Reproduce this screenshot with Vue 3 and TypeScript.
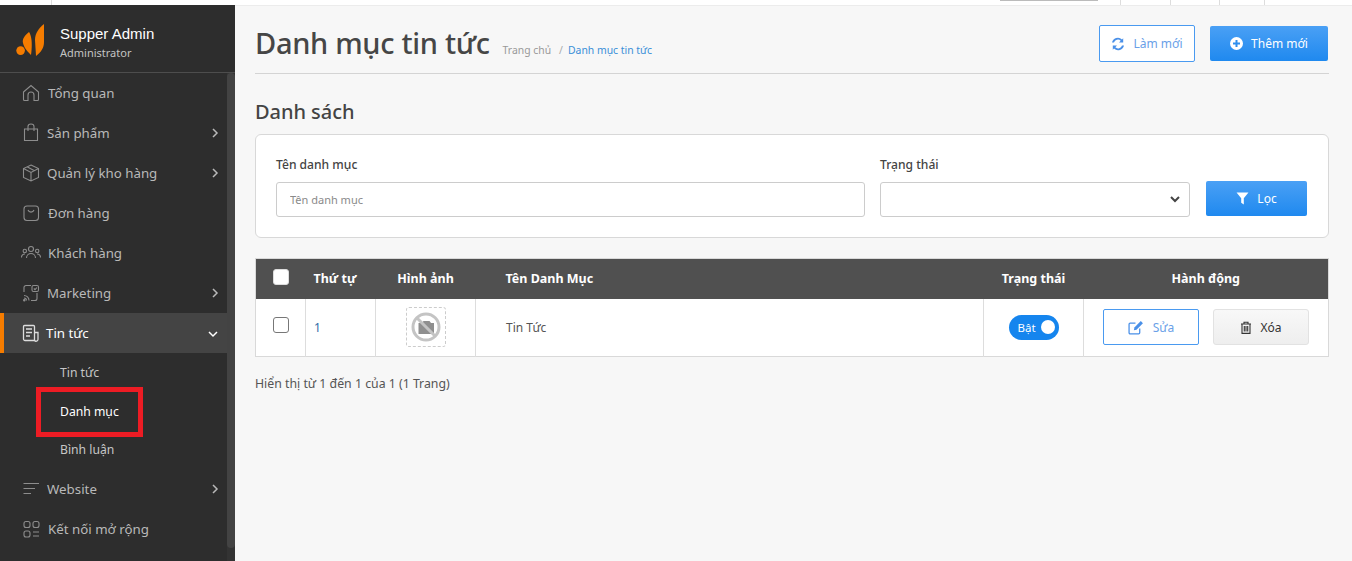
<script setup lang="ts">
interface Item { label: string; icon: string; arrow?: boolean; active?: boolean; gap: number }
const items: Item[] = [
  { label: 'Tổng quan', icon: 'home', gap: 7 },
  { label: 'Sản phẩm', icon: 'bag', arrow: true, gap: 6 },
  { label: 'Quản lý kho hàng', icon: 'box', arrow: true, gap: 6 },
  { label: 'Đơn hàng', icon: 'order', gap: 7 },
  { label: 'Khách hàng', icon: 'users', gap: 7 },
  { label: 'Marketing', icon: 'mkt', arrow: true, gap: 6 },
  { label: 'Tin tức', icon: 'news', active: true, gap: 5 },
]
const after: Item[] = [
  { label: 'Website', icon: 'lines', arrow: true, gap: 6 },
  { label: 'Kết nối mở rộng', icon: 'grid', gap: 7 },
]
const subs = ['Tin tức', 'Danh mục', 'Bình luận']
</script>

<template>
  <div class="page">
    <div class="topstrip">
      <span class="t1"></span>
      <span class="t2"></span>
      <span class="tabs"><i></i><i></i><i></i><i></i></span>
    </div>
    <div class="body">
      <aside class="side">
        <div class="brand">
          <svg class="logo" width="30" height="34" viewBox="0 0 30 34">
            <circle cx="5.600" cy="27.600" r="4.300" fill="#f57c00" />
            <path d="M14 9 C10 12 7 16 8 20 C9 25 13 29 16 32 C17 25 17 18 16 14 C15.500 12 15 10 14 9Z" fill="#f57c00" />
            <path d="M29 1 C24 5 20 10 20 17 L21 33 C26 29 29 25 29 19Z" fill="#f57c00" />
          </svg>
          <div class="who">
            <div class="name">Supper Admin</div>
            <div class="role">Administrator</div>
          </div>
        </div>
        <div class="scrollwrap">
          <nav class="menu">
            <a v-for="it in items" :key="it.label" class="item" :class="{ active: it.active }">
              <svg class="ic" width="20" height="20" viewBox="0 0 20 20" fill="none" stroke="currentColor" stroke-width="1.100">
                <template v-if="it.icon === 'home'">
                  <path d="M2.500 9 L10 2.500 L17.500 9 V16.500 a1 1 0 0 1 -1 1 H13 V12 a3 3 0 0 0 -6 0 V17.500 H3.500 a1 1 0 0 1 -1 -1Z" />
                </template>
                <template v-else-if="it.icon === 'bag'">
                  <path d="M3.500 6 H16.500 V17.500 H3.500Z M7 8 V3.500 a3 2.500 0 0 1 6 0 V8" />
                </template>
                <template v-else-if="it.icon === 'box'">
                  <path d="M10 2 L17.500 5.500 V14.500 L10 18 L2.500 14.500 V5.500Z M2.500 5.500 L10 9.500 L17.500 5.500 M10 9.500 V18 M6 3.800 L13.500 7.800" />
                </template>
                <template v-else-if="it.icon === 'order'">
                  <rect x="3" y="3" width="14.500" height="14.500" rx="3" /><path d="M7 7 a3.200 3.200 0 0 0 6 0" />
                </template>
                <template v-else-if="it.icon === 'users'">
                  <circle cx="10" cy="6" r="2.500" /><circle cx="3.800" cy="8" r="1.700" /><circle cx="16.200" cy="8" r="1.700" />
                  <path d="M5.500 15 a4.500 4.500 0 0 1 9 0 M0.500 14.500 a3.300 3.300 0 0 1 3.500 -3.500 M19.500 14.500 a3.300 3.300 0 0 0 -3.500 -3.500" />
                </template>
                <template v-else-if="it.icon === 'mkt'">
                  <path d="M3 9 V4.500 a2 2 0 0 1 2 -2 H10 M16 10 V15.500 a2 2 0 0 1 -2 2 H10" />
                  <rect x="11" y="2.500" width="6.500" height="6" rx="1.500" /><path d="M12.800 5.500 l1.200 1.200 2 -2.200" />
                  <path d="M3 12.500 a5 5 0 0 1 5 5 M3 15 a2.500 2.500 0 0 1 2.500 2.500" /><circle cx="3.300" cy="17.300" r=".7" fill="currentColor" />
                </template>
                <template v-else-if="it.icon === 'news'">
                  <path d="M13.500 17.500 H4 a1.500 1.500 0 0 1 -1.500 -1.500 V3.500 a1 1 0 0 1 1 -1 H12.500 a1 1 0 0 1 1 1 V17.500 a2 2 0 0 0 3.500 -1 V9.500 H13.500" stroke-width="1.300" />
                  <path d="M5 6 H11 M5 9.500 H11 M5 13 H9" stroke-width="1.500" />
                </template>
              </svg>
              <span class="lb" :style="{ marginLeft: it.gap + 'px' }">{{ it.label }}</span>
              <svg v-if="it.arrow" class="ar" width="8" height="10" viewBox="0 0 8 10" fill="none" stroke="currentColor" stroke-width="1.500"><path d="M2 1 L6 5 L2 9" /></svg>
              <svg v-if="it.active" class="ar down" width="10" height="8" viewBox="0 0 10 8" fill="none" stroke="currentColor" stroke-width="1.500"><path d="M1 2 L5 6 L9 2" /></svg>
            </a>
            <div class="subs">
              <a v-for="s in subs" :key="s" class="sub" :class="{ cur: s === 'Danh mục' }">{{ s }}</a>
              <div class="redbox"></div>
            </div>
            <a v-for="it in after" :key="it.label" class="item">
              <svg class="ic" width="20" height="20" viewBox="0 0 20 20" fill="none" stroke="currentColor" stroke-width="1.100">
                <template v-if="it.icon === 'lines'">
                  <path d="M2.500 4.500 H18 M2.500 9.500 H14 M2.500 14.500 H10" />
                </template>
                <template v-else>
                  <rect x="3" y="2.500" width="6" height="6" rx="2" /><rect x="12" y="2.500" width="6" height="6" rx="2" /><rect x="3" y="12" width="6" height="6" rx="2" />
                  <path d="M12 13 H18 M12 17 H18" />
                </template>
              </svg>
              <span class="lb" :style="{ marginLeft: it.gap + 'px' }">{{ it.label }}</span>
              <svg v-if="it.arrow" class="ar" width="8" height="10" viewBox="0 0 8 10" fill="none" stroke="currentColor" stroke-width="1.500"><path d="M2 1 L6 5 L2 9" /></svg>
            </a>
          </nav>
          <div class="scrollbar"><div class="thumb"></div></div>
        </div>
      </aside>

      <main class="main">
        <header class="head">
          <div class="titles">
            <h1>Danh mục tin tức</h1>
            <div class="crumb"><span class="c1">Trang chủ</span><span class="sep">/</span><span class="c2">Danh mục tin tức</span></div>
          </div>
          <div class="actions">
            <button class="btn outline refresh">
              <svg width="14" height="14" viewBox="0 0 14 14" fill="#4a90e8"><path d="M12.200 1.200 V5.400 H8 L9.700 3.700 A4.100 4.100 0 0 0 3 5.600 H1 A6 6 0 0 1 11 2.400Z M1.800 12.800 V8.600 H6 L4.300 10.300 A4.100 4.100 0 0 0 11 8.400 H13 A6 6 0 0 1 3 11.600Z" /></svg>
              Làm mới
            </button>
            <button class="btn primary add">
              <svg width="13" height="13" viewBox="0 0 13 13"><circle cx="6.500" cy="6.500" r="6.500" fill="#fff" /><path d="M6.500 3 V10 M3 6.500 H10" stroke="#2f8fee" stroke-width="2" /></svg>
              Thêm mới
            </button>
          </div>
        </header>

        <h2>Danh sách</h2>

        <section class="filter">
          <div class="f-name">
            <label>Tên danh mục</label>
            <input class="inp" placeholder="Tên danh mục" />
          </div>
          <div class="f-status">
            <label>Trạng thái</label>
            <div class="sel">
              <svg width="10" height="7" viewBox="0 0 10 7" fill="none" stroke="#444" stroke-width="2"><path d="M1 1 L5 5 L9 1" /></svg>
            </div>
          </div>
          <button class="btn primary loc">
            <svg width="13" height="13" viewBox="0 0 12 12" fill="#fff"><path d="M0.500 0.500 H11.500 L7.200 5.800 V11.500 L4.800 10 V5.800Z" /></svg>
            Lọc
          </button>
        </section>

        <table class="tbl">
          <colgroup>
            <col class="w50" /><col class="w70" /><col class="w100" /><col /><col class="w100" /><col class="w245" />
          </colgroup>
          <thead>
            <tr>
              <th><span class="cb white"></span></th>
              <th class="l7">Thứ tự</th>
              <th>Hình ảnh</th>
              <th class="l30">Tên Danh Mục</th>
              <th>Trạng thái</th>
              <th>Hành động</th>
            </tr>
          </thead>
          <tbody>
            <tr>
              <td class="c"><span class="cb"></span></td>
              <td class="num">1</td>
              <td class="c">
                <span class="noimg">
                  <svg width="32" height="32" viewBox="0 0 32 32">
                    <path d="M8.500 12 H12 L13.500 10 H19.500 L21 12 H24 V23 H8.500Z" fill="#8f8f8f" />
                    <circle cx="16" cy="16" r="13" fill="none" stroke="#c4c4c4" stroke-width="3" />
                    <path d="M7 7 L25 25" stroke="#c4c4c4" stroke-width="3" />
                  </svg>
                </span>
              </td>
              <td class="name-cell">Tin Tức</td>
              <td class="c"><span class="toggle">Bật<i></i></span></td>
              <td>
                <div class="row-act">
                  <button class="btn outline edit">
                    <svg width="16" height="15" viewBox="0 0 15 14" fill="none" stroke="#4a90e8" stroke-width="1.200"><path d="M11 8 V12 a1 1 0 0 1 -1 1 H2 a1 1 0 0 1 -1 -1 V4 a1 1 0 0 1 1 -1 H7" /><path d="M5.500 9.500 L6 7 L12 1 L14 3 L8 9Z" fill="#4a90e8" stroke="none" /></svg>
                    Sửa
                  </button>
                  <button class="btn gray del">
                    <svg width="12" height="13" viewBox="0 0 12 13" fill="none" stroke="#333" stroke-width="1.100"><path d="M1 3 H11 M4 3 V1.200 H8 V3 M2 3 V12.400 H10 V3 M4.300 5 V10.500 M6 5 V10.500 M7.700 5 V10.500" /></svg>
                    Xóa
                  </button>
                </div>
              </td>
            </tr>
          </tbody>
        </table>
        <p class="foot">Hiển thị từ 1 đến 1 của 1 (1 Trang)</p>
      </main>
    </div>
  </div>
</template>

<style>
html, body { margin: 0; padding: 0; overflow: hidden; }
</style>

<style scoped>
.page { width: 1352px; height: 561px; overflow: hidden; font-family: "Noto Sans", "Open Sans", sans-serif; background: #f7f7f7; color: #444; }
.topstrip { height: 5px; background: #fff; border-bottom: 1px solid #ececec; display: flex; position: relative; }
.t1 { width: 51px; border-right: 1px solid #ddd; }
.t2 { position: absolute; left: 1000px; top: 0; width: 98px; height: 1px; background: #bbb; }
.tabs { margin-left: auto; display: flex; width: 232px; }
.tabs i { width: 50px; border-left: 1px solid #ddd; box-sizing: border-box; }
.tabs i:nth-child(2) { width: 49px; }
.tabs i:nth-child(3) { width: 45px; }
.tabs i:nth-child(4) { width: 88px; }
.body { display: flex; height: 556px; margin-top: -1px; }
.side { width: 235px; flex: none; background: #2d2d2d; color: #b9b9b9; display: flex; flex-direction: column; position: relative; z-index: 1; }
.brand { height: 68px; box-sizing: border-box; border-bottom: 1px solid #4d4d4d; display: flex; align-items: center; padding-left: 15px; flex: none; }
.logo { flex: none; margin-top: 2px; }
.who { margin-left: 15px; margin-top: 8px; }
.name { line-height: 19px; color: #fff; font-family: "Liberation Sans", sans-serif; font-size: 15px; }
.role { font-size: 11px; line-height: 17px; margin-top: 1px; color: #c4c4c4; }
.scrollwrap { display: flex; flex: 1; min-height: 0; }
.menu { width: 227px; flex: none; }
.scrollbar { width: 8px; background: #333; }
.thumb { height: 475px; background: #434343; border-radius: 4px; }
.item { height: 40px; display: flex; align-items: center; padding-left: 21px; font-size: 13.300px; position: relative; box-sizing: border-box; }
.ic { flex: none; color: #8d8d8d; }
.lb { white-space: nowrap; }
.ar { position: absolute; right: 8px; top: 15px; color: #b9b9b9; }
.item.active { background: #444; color: #fff; border-left: 4px solid #f57c00; padding-left: 17px; }
.item.active .ic { color: #ddd; }
.item.active .ar { color: #fff; right: 9px; top: 17px; }
.subs { position: relative; height: 116px; box-sizing: border-box; }
.sub { display: block; height: 39px; line-height: 39px; padding-left: 60px; font-size: 12.200px; color: #c6c6c6; }
.sub.cur { color: #fff; }
.sub:last-of-type { height: 38px; line-height: 38px; }
.redbox { position: absolute; left: 36px; top: 34px; width: 107px; height: 50px; box-sizing: border-box; border: 5px solid #ed1c24; }
.main { flex: 1; min-width: 0; box-sizing: border-box; padding: 0 23px 0 20px; }
.head { height: 69px; box-sizing: border-box; border-bottom: 1px solid #d4d4d4; display: flex; align-items: flex-start; justify-content: space-between; padding-top: 20px; }
.titles { display: flex; align-items: baseline; }
h1 { margin: 0; font-size: 29px; line-height: 36px; font-weight: 500; letter-spacing: -.3px; color: #464646; white-space: nowrap; }
.crumb { font-size: 10.400px; margin-left: 13px; white-space: nowrap; }
.c1 { color: #999; }
.sep { color: #aaa; margin: 0 5px 0 8px; }
.c2 { color: #3a8fd8; }
.actions { display: flex; gap: 15px; padding-right: 1px; }
.btn { box-sizing: border-box; font-family: inherit; display: inline-flex; align-items: center; justify-content: center; font-size: 12px; border-radius: 2px; padding: 0; cursor: pointer; }
.btn.outline { background: #fff; border: 1px solid #4a9af0; color: #6a9fe8; }
.btn.primary { border: 0; color: #fff; background: linear-gradient(#4aa0f5, #1f89ef); }
.btn.gray { background: linear-gradient(#f8f8f8, #eee); border: 1px solid #e2e2e2; color: #333; }
.refresh { width: 96px; height: 37px; gap: 8px; }
.add { width: 118px; height: 35px; gap: 8px; margin-top: 1px; }
h2 { margin: 24px 0 0; font-size: 20px; line-height: 27px; font-weight: 500; letter-spacing: -.05px; color: #444; }
.filter { margin-top: 9px; height: 104px; box-sizing: border-box; background: #fff; border: 1px solid #d8d8d8; border-radius: 6px; display: flex; padding: 0 21px 0 20px; align-items: flex-start; }
label { display: block; font-size: 12.100px; line-height: 16px; font-weight: 500; color: #444; margin-top: 22px; margin-bottom: 9px; }
.f-name { width: 589px; margin-right: 15px; flex: none; }
.inp { width: 100%; box-sizing: border-box; height: 35px; border: 1px solid #ccc; border-radius: 3px; padding: 0 13px; font-size: 11px; font-family: inherit; outline: 0; background: #fff; }
.inp::placeholder { color: #8a8a8a; }
.f-status { width: 310px; flex: none; }
.sel { height: 35px; box-sizing: border-box; border: 1px solid #ccc; border-radius: 3px; display: flex; align-items: center; justify-content: flex-end; padding-right: 9px; background: #fff; }
.loc { width: 101px; height: 35px; margin: 46px 0 0 16px; gap: 8px; flex: none; }
.tbl { width: 100%; margin-top: 20px; border-collapse: collapse; table-layout: fixed; background: #fff; font-size: 12px; color: #444; border: 1px solid #d9d9d9; }
.w50 { width: 50px; }
.w70 { width: 70px; }
.w100 { width: 100px; }
.w245 { width: 245px; }
.tbl th { height: 40px; background: #505050; color: #fff; font-weight: 700; text-align: center; font-size: 12.500px; padding: 0; box-sizing: border-box; }
.tbl td { height: 58px; padding: 0; border-left: 1px solid #ddd; box-sizing: border-box; }
.tbl td:first-child { border-left: 0; }
.tbl th.l7 { text-align: left; padding-left: 8px; }
.tbl th.l30 { text-align: left; padding-left: 30px; }
.cb { display: inline-block; width: 16px; height: 16px; border: 1px solid #777; border-radius: 3px; background: #fff; vertical-align: middle; box-sizing: border-box; margin-bottom: 4px; }
.cb.white { border-color: #ddd; }
.c { text-align: center; }
.num { padding-left: 8px !important; color: #2f6da8; }
.noimg { display: inline-flex; width: 40px; height: 40px; box-sizing: border-box; border: 1px dashed #ccc; border-radius: 3px; align-items: center; justify-content: center; vertical-align: middle; }
.name-cell { padding-left: 30px !important; color: #555; }
.toggle { display: inline-flex; align-items: center; justify-content: space-between; width: 50px; height: 25px; border-radius: 13px; background: #1585ee; color: #fff; padding: 0 4px 0 9px; box-sizing: border-box; font-size: 11.500px; vertical-align: middle; }
.toggle i { width: 14px; height: 14px; border-radius: 50%; background: #fff; }
.row-act { display: flex; gap: 14px; padding-left: 19px; }
.edit { width: 96px; height: 36px; gap: 9px; }
.del { width: 96px; height: 36px; gap: 8px; border-radius: 3px; }
.foot { margin: 19px 0 0; font-size: 12.300px; line-height: 16px; color: #555; }
</style>
